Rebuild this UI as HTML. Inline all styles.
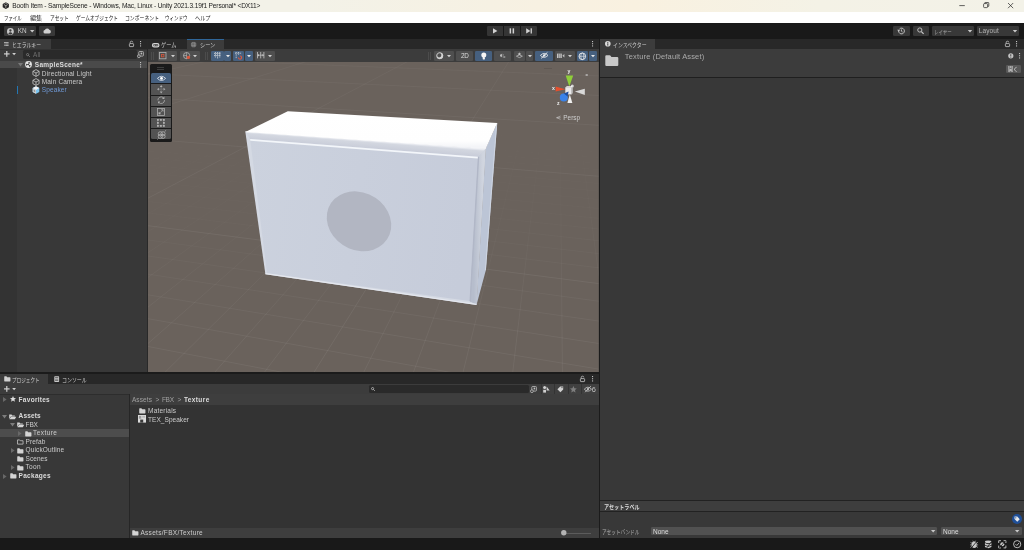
<!DOCTYPE html>
<html>
<head>
<meta charset="utf-8">
<title>Unity</title>
<style>
html,body{margin:0;padding:0;}
body{width:1024px;height:550px;overflow:hidden;background:#383838;position:relative;font-family:"Liberation Sans",sans-serif;font-size:6.5px;color:#c4c4c4;}
.a{position:absolute;}
.t{position:absolute;white-space:nowrap;line-height:1;}
svg{position:absolute;overflow:visible;}
svg text{font-family:"Liberation Sans","Noto Sans CJK JP",sans-serif;}
</style>
</head>
<body>
<div id="root" style="position:absolute;left:0;top:0;width:1024px;height:550px;will-change:transform;">
<div class="a" style="left:0px;top:0px;width:1024px;height:11.7px;background:linear-gradient(90deg,#f3f2e8 0%,#f3f2e8 30%,#f6f1e3 48%,#f9f1e0 62%,#f4f2e6 80%,#f3f2e8 100%);"></div>
<div class="a" style="left:0px;top:11.7px;width:1024px;height:11.1px;background:#ffffff;"></div>
<div class="a" style="left:0px;top:22.7px;width:1024px;height:16.1px;background:#191919;"></div>
<svg style="left:1.7px;top:1.5px" width="7.6" height="7.2" viewBox="0 0 18 18"><path d="M9 0.4 L16.8 4.7 V13.3 L9 17.6 L1.2 13.3 V4.7 Z" fill="#262626"/><path d="M9 9.2 V14.6 M9 9.2 L4.2 6.4 M9 9.2 L13.8 6.4" stroke="#d8d6cc" stroke-width="1.6" fill="none"/><path d="M6.2 4.2 L9 2.8 L11.8 4.2" stroke="#d8d6cc" stroke-width="1.2" fill="none"/></svg>
<div class="t" style="left:12.3px;top:3px;font-size:6.6px;color:#1b1b1b;letter-spacing:-0.15px;">Booth Item - SampleScene - Windows, Mac, Linux - Unity 2021.3.19f1 Personal* &lt;DX11&gt;</div>
<svg style="left:0;top:0" width="1024" height="12"><g stroke="#222" stroke-width="0.7" fill="none"><path d="M959.3 5.6 H964.8"/><rect x="983.6" y="3.6" width="4" height="4" rx="0.8"/><path d="M984.8 3.6 V2.8 Q984.8 2.5 985.2 2.5 H988.2 Q988.8 2.5 988.8 3.1 V6 Q988.8 6.4 988.4 6.4 H987.6"/><path d="M1008 3 L1013.2 8.2 M1013.2 3 L1008 8.2"/></g></svg>
<svg style="left:3.8px;top:19.88px" width="17.6" height="1"><text x="0" y="0" font-size="6" fill="#1a1a1a" textLength="17.6" lengthAdjust="spacingAndGlyphs">ファイル</text></svg>
<svg style="left:29.8px;top:19.88px" width="12.2" height="1"><text x="0" y="0" font-size="6" fill="#1a1a1a" textLength="12.2" lengthAdjust="spacingAndGlyphs">編集</text></svg>
<svg style="left:49.6px;top:19.88px" width="18.8" height="1"><text x="0" y="0" font-size="6" fill="#1a1a1a" textLength="18.8" lengthAdjust="spacingAndGlyphs">アセット</text></svg>
<svg style="left:75.8px;top:19.88px" width="42" height="1"><text x="0" y="0" font-size="6" fill="#1a1a1a" textLength="42" lengthAdjust="spacingAndGlyphs">ゲームオブジェクト</text></svg>
<svg style="left:124.8px;top:19.88px" width="34" height="1"><text x="0" y="0" font-size="6" fill="#1a1a1a" textLength="34" lengthAdjust="spacingAndGlyphs">コンポーネント</text></svg>
<svg style="left:165.4px;top:19.88px" width="22.6" height="1"><text x="0" y="0" font-size="6" fill="#1a1a1a" textLength="22.6" lengthAdjust="spacingAndGlyphs">ウィンドウ</text></svg>
<svg style="left:195.2px;top:19.88px" width="15.5" height="1"><text x="0" y="0" font-size="6" fill="#1a1a1a" textLength="15.5" lengthAdjust="spacingAndGlyphs">ヘルプ</text></svg>
<div class="a" style="left:4.1px;top:26px;width:31.7px;height:9.8px;background:#383838;border-radius:1.2px;"></div>
<div class="a" style="left:39px;top:26px;width:16.2px;height:9.8px;background:#383838;border-radius:1.2px;"></div>
<svg style="left:6.8px;top:27.5px" width="6.8" height="6.8" viewBox="0 0 14 14"><circle cx="7" cy="7" r="7" fill="#c8c8c8"/><circle cx="7" cy="5.2" r="2.4" fill="#383838"/><path d="M2.6 11.4 Q7 6.4 11.4 11.4 Q7 15 2.6 11.4Z" fill="#383838"/></svg>
<div class="t" style="left:17.8px;top:28px;font-size:6.4px;color:#cccccc;letter-spacing:-0.15px;">KN</div>
<svg style="left:29.6px;top:29.8px" width="5" height="3"><path d="M0 0 H4.4 L2.2 2.6Z" fill="#c8c8c8"/></svg>
<svg style="left:42.8px;top:28.2px" width="8.2" height="5.8" viewBox="0 0 18 13"><path d="M4.5 12.5 A4 4 0 0 1 4 4.6 A5.2 5.2 0 0 1 13.8 4.2 A4.2 4.2 0 0 1 14 12.5 Z" fill="#d0d0d0"/></svg>
<div class="a" style="left:486.6px;top:26px;width:50.2px;height:9.8px;background:#353535;border-radius:1.2px;"></div>
<div class="a" style="left:502.6px;top:26px;width:0.5px;height:9.8px;background:#191919;"></div>
<div class="a" style="left:519.6px;top:26px;width:0.5px;height:9.8px;background:#191919;"></div>
<svg style="left:0;top:0" width="1024" height="40"><g fill="#d2d2d2"><path d="M493 28.3 L497.4 30.9 L493 33.5Z"/><rect x="509.6" y="28.3" width="1.5" height="5.2"/><rect x="512.6" y="28.3" width="1.5" height="5.2"/><path d="M526.2 28.3 L530.4 30.9 L526.2 33.5Z"/><rect x="530.6" y="28.3" width="1.3" height="5.2"/></g></svg>
<div class="a" style="left:893.1px;top:26px;width:16.7px;height:9.8px;background:#383838;border-radius:1.2px;"></div>
<div class="a" style="left:913px;top:26px;width:15.9px;height:9.8px;background:#383838;border-radius:1.2px;"></div>
<div class="a" style="left:932.1px;top:26px;width:41.7px;height:9.8px;background:#383838;border-radius:1.2px;"></div>
<div class="a" style="left:977.3px;top:26px;width:41.4px;height:9.8px;background:#383838;border-radius:1.2px;"></div>
<svg style="left:0;top:0" width="1024" height="40"><g fill="none" stroke="#c8c8c8" stroke-width="0.9"><path d="M898.6 31 A2.9 2.9 0 1 0 899.6 28.8"/><path d="M901.4 29.4 V31.2 L902.6 32"/><circle cx="919.8" cy="30" r="2.1"/><path d="M921.4 31.6 L923.6 33.9" stroke-width="1.2"/></g><path d="M897.2 29.8 L900.2 29.8 L898.7 31.8Z" fill="#c8c8c8"/><path d="M967.8 29.9 H972.2 L970 32.5Z M1012.8 29.9 H1017.2 L1015 32.5Z" fill="#c8c8c8"/></svg>
<svg style="left:934.2px;top:33.5px" width="17.6" height="1"><text x="0" y="0" font-size="6" fill="#a8a8a8" textLength="17.6" lengthAdjust="spacingAndGlyphs">レイヤー</text></svg>
<div class="t" style="left:978.8px;top:28px;font-size:6.5px;color:#b4b4b4;letter-spacing:0.11px;">Layout</div>
<div class="a" style="left:0px;top:38.8px;width:147px;height:10px;background:#282828;"></div>
<div class="a" style="left:0px;top:38.8px;width:51px;height:10px;background:#3c3c3c;"></div>
<div class="a" style="left:0px;top:48.8px;width:147px;height:11.8px;background:#3c3c3c;"></div>
<div class="a" style="left:0px;top:60.6px;width:147px;height:311.8px;background:#383838;"></div>
<div class="a" style="left:0px;top:60.6px;width:16.8px;height:311.8px;background:#333333;"></div>
<div class="a" style="left:147px;top:38.8px;width:1.2px;height:334px;background:#292929;"></div>
<svg style="left:4.2px;top:41.6px" width="6" height="5"><g fill="#c4c4c4"><rect x="0" y="0" width="4.6" height="0.8"/><rect x="1.2" y="1.6" width="3.4" height="0.8"/><rect x="1.2" y="3.2" width="3.4" height="0.8"/><rect x="0" y="1.6" width="0.7" height="0.8"/><rect x="0" y="3.2" width="0.7" height="0.8"/></g></svg>
<svg style="left:12px;top:47px" width="29" height="1"><text x="0" y="0" font-size="6" fill="#cccccc" textLength="29" lengthAdjust="spacingAndGlyphs">ヒエラルキー</text></svg>
<svg style="left:128.7px;top:40.6px" width="6" height="7"><rect x="0.4" y="2.6" width="4.2" height="3" rx="0.6" fill="none" stroke="#c4c4c4" stroke-width="0.8"/><path d="M1.2 2.6 V1.6 A1.3 1.3 0 0 1 3.8 1.4" fill="none" stroke="#c4c4c4" stroke-width="0.8"/></svg>
<svg style="left:139.75px;top:41.15px" width="2" height="8"><g fill="#c4c4c4"><rect x="0" y="0" width="1.1" height="1.1"/><rect x="0" y="2.2" width="1.1" height="1.1"/><rect x="0" y="4.4" width="1.1" height="1.1"/></g></svg>
<svg style="left:3.6px;top:51.4px" width="14" height="7"><g fill="#d0d0d0"><rect x="2.2" y="0" width="1.2" height="5.8"/><rect x="0" y="2.3" width="5.6" height="1.2"/><path d="M8.2 2 H12 L10.1 4.2Z"/></g></svg>
<div class="a" style="left:0px;top:48.8px;width:147px;height:1.4px;background:#333333;"></div>
<div class="a" style="left:23.2px;top:50.3px;width:113.4px;height:8.6px;background:#2a2a2a;border-radius:1.5px;"></div>
<svg style="left:25.6px;top:52.6px" width="6" height="5"><circle cx="1.6" cy="1.6" r="1.1" fill="none" stroke="#8a8a8a" stroke-width="0.7"/><path d="M2.4 2.4 L3.8 3.8" stroke="#8a8a8a" stroke-width="0.8"/></svg>
<div class="t" style="left:33.1px;top:52px;font-size:6.4px;color:#6e6e6e;letter-spacing:0.1px;">All</div>
<svg style="left:137.2px;top:51.2px" width="8" height="8"><rect x="1.8" y="0.5" width="4.6" height="4.6" rx="0.8" fill="none" stroke="#c0c0c0" stroke-width="0.8"/><circle cx="1.9" cy="5.2" r="1.4" fill="#3c3c3c" stroke="#c0c0c0" stroke-width="0.8"/><rect x="3.6" y="1.6" width="1.6" height="1.8" fill="#c0c0c0"/></svg>
<div class="a" style="left:0px;top:60.6px;width:147px;height:7.4px;background:#4a4a4a;"></div>
<svg style="left:18px;top:62.8px" width="6" height="5"><path d="M0 0 H5 L2.5 3.6Z" fill="#7a7a7a"/></svg>
<svg style="left:25px;top:60.8px" width="7" height="7" viewBox="0 0 14 14"><circle cx="7" cy="7" r="6.8" fill="#e6e6e6"/><path d="M7 7 L7 1.6 L10.4 3.4 Z M7 7 L11.8 9.6 L8.6 11.8Z M7 7 L2.2 9.6 L2.4 5.4Z" fill="#333"/><circle cx="7" cy="7" r="1.2" fill="#333"/></svg>
<div class="t" style="left:34.8px;top:62px;font-size:6.5px;color:#dcdcdc;font-weight:bold;letter-spacing:0.27px;">SampleScene*</div>
<svg style="left:140.05px;top:61.65px" width="2" height="8"><g fill="#c4c4c4"><rect x="0" y="0" width="1.1" height="1.1"/><rect x="0" y="2.2" width="1.1" height="1.1"/><rect x="0" y="4.4" width="1.1" height="1.1"/></g></svg>
<svg style="left:31.9px;top:69.2px" width="8" height="8" viewBox="0 0 16 16"><g fill="none" stroke="#d0d0d0" stroke-width="1.5"><path d="M8 1.2 L14.2 4.6 V11.4 L8 14.8 L1.8 11.4 V4.6Z"/><path d="M1.8 4.6 L8 8 L14.2 4.6 M8 8 V14.8"/></g></svg>
<div class="t" style="left:41.8px;top:71px;font-size:6.5px;color:#cccccc;letter-spacing:0.2px;">Directional Light</div>
<svg style="left:31.9px;top:77.5px" width="8" height="8" viewBox="0 0 16 16"><g fill="none" stroke="#d0d0d0" stroke-width="1.5"><path d="M8 1.2 L14.2 4.6 V11.4 L8 14.8 L1.8 11.4 V4.6Z"/><path d="M1.8 4.6 L8 8 L14.2 4.6 M8 8 V14.8"/></g></svg>
<div class="t" style="left:41.8px;top:79px;font-size:6.5px;color:#cccccc;letter-spacing:0.14px;">Main Camera</div>
<svg style="left:31.9px;top:86px" width="8" height="8" viewBox="0 0 16 16"><path d="M8 0.6 L14.6 4.2 V11.8 L8 15.4 L1.4 11.8 V4.2Z" fill="#7cc6f2"/><path d="M8 0.6 L14.6 4.2 L8 7.8 L1.4 4.2Z" fill="#f4f4f4"/><path d="M8 7.8 V15.4 L1.4 11.8 V4.2Z" fill="#d4d4d4"/><path d="M3.4 7 L6.4 8.8 V12.4 L3.4 10.6Z" fill="#4a4a4a" opacity="0.55"/></svg>
<div class="t" style="left:41.8px;top:87px;font-size:6.5px;color:#7099d6;letter-spacing:0.11px;">Speaker</div>
<div class="a" style="left:16.8px;top:85.8px;width:1.1px;height:8px;background:#2377b4;"></div>
<div class="a" style="left:148.2px;top:38.8px;width:450.8px;height:10px;background:#282828;"></div>
<div class="a" style="left:187.3px;top:38.8px;width:36.7px;height:10px;background:#3c3c3c;"></div><div class="a" style="left:187.3px;top:38.8px;width:36.7px;height:0.7px;background:#2f6699;"></div>
<div class="a" style="left:148.2px;top:48.8px;width:450.8px;height:14px;background:#3c3c3c;"></div>
<div class="a" style="left:599px;top:38.8px;width:1.3px;height:500px;background:#1b1b1b;"></div>
<svg style="left:152.2px;top:42.6px" width="8" height="5"><rect x="0.5" y="0.6" width="6.4" height="3.2" rx="1.6" fill="none" stroke="#d4d4d4" stroke-width="1.2"/><rect x="1.4" y="1.8" width="2" height="0.9" fill="#d4d4d4"/><rect x="4.4" y="1.8" width="1.2" height="0.9" fill="#d4d4d4"/></svg>
<svg style="left:161.4px;top:47px" width="15.4" height="1"><text x="0" y="0" font-size="6" fill="#cccccc" textLength="15.4" lengthAdjust="spacingAndGlyphs">ゲーム</text></svg>
<svg style="left:191px;top:41.9px" width="6" height="6"><g fill="none" stroke="#a4a4a4" stroke-width="0.55"><rect x="0.4" y="0.4" width="4.4" height="4.4" rx="1.3"/><path d="M0.4 1.9 H4.8 M0.4 3.4 H4.8 M1.9 0.4 V4.8 M3.4 0.4 V4.8"/></g></svg>
<svg style="left:199.7px;top:47px" width="15.3" height="1"><text x="0" y="0" font-size="6" fill="#cccccc" textLength="15.3" lengthAdjust="spacingAndGlyphs">シーン</text></svg>
<svg style="left:591.65px;top:41.15px" width="2" height="8"><g fill="#c4c4c4"><rect x="0" y="0" width="1.1" height="1.1"/><rect x="0" y="2.2" width="1.1" height="1.1"/><rect x="0" y="4.4" width="1.1" height="1.1"/></g></svg>
<div class="a" style="left:151.4px;top:51.6px;width:0.6px;height:8.4px;background:#4c4c4c;"></div>
<div class="a" style="left:153px;top:51.6px;width:0.6px;height:8.4px;background:#4c4c4c;"></div>
<div class="a" style="left:158px;top:50.6px;width:19.4px;height:10.4px;background:#4f4f4f;border-radius:1.2px;"></div>
<div class="a" style="left:179.9px;top:50.6px;width:19.9px;height:10.4px;background:#4f4f4f;border-radius:1.2px;"></div>
<svg style="left:159.3px;top:52.4px" width="8" height="8"><rect x="0.4" y="0.4" width="6.6" height="6.4" fill="none" stroke="#b4b4b4" stroke-width="0.8"/><rect x="2.5" y="2.4" width="2.4" height="2.4" fill="none" stroke="#d8553a" stroke-width="0.8"/></svg>
<svg style="left:170.6px;top:55.1px" width="5" height="3"><path d="M0 0 H4 L2 2.3Z" fill="#d0d0d0"/></svg>
<svg style="left:182.6px;top:52px" width="8" height="8"><circle cx="3.6" cy="3.6" r="3.1" fill="none" stroke="#c4c4c4" stroke-width="0.7"/><path d="M3.6 0.5 V6.7 M0.5 3.6 H3.6" stroke="#c4c4c4" stroke-width="0.6"/><circle cx="5.4" cy="5.4" r="1.7" fill="#d8553a"/></svg>
<svg style="left:192.8px;top:55.1px" width="5" height="3"><path d="M0 0 H4 L2 2.3Z" fill="#d0d0d0"/></svg>
<div class="a" style="left:205.2px;top:51.6px;width:0.6px;height:8.4px;background:#4c4c4c;"></div>
<div class="a" style="left:206.8px;top:51.6px;width:0.6px;height:8.4px;background:#4c4c4c;"></div>
<div class="a" style="left:211px;top:50.6px;width:12.6px;height:10.4px;background:#46607f;border-radius:1.2px;"></div>
<div class="a" style="left:224px;top:50.6px;width:7px;height:10.4px;background:#46607f;border-radius:1.2px;"></div>
<svg style="left:225.5px;top:55.1px" width="5" height="3"><path d="M0 0 H4 L2 2.3Z" fill="#e8e8e8"/></svg>
<div class="a" style="left:233.3px;top:50.6px;width:10.9px;height:10.4px;background:#46607f;border-radius:1.2px;"></div>
<div class="a" style="left:244.6px;top:50.6px;width:8.1px;height:10.4px;background:#46607f;border-radius:1.2px;"></div>
<svg style="left:246.6px;top:55.1px" width="5" height="3"><path d="M0 0 H4 L2 2.3Z" fill="#e8e8e8"/></svg>
<div class="a" style="left:255px;top:50.6px;width:19.9px;height:10.4px;background:#4f4f4f;border-radius:1.2px;"></div>
<svg style="left:268.2px;top:55.1px" width="5" height="3"><path d="M0 0 H4 L2 2.3Z" fill="#d0d0d0"/></svg>
<svg style="left:213.6px;top:52.2px" width="8" height="8"><g stroke="#eee" stroke-width="0.7" fill="none"><path d="M0 1.4 H7 M0 3.6 H7 M1.4 0 V5.6 M3.6 0 V7 M5.8 0 V5.6" stroke-dasharray="1.2 0.5"/></g></svg>
<svg style="left:235.2px;top:52.2px" width="8" height="8"><g stroke="#eee" stroke-width="0.7" fill="none" stroke-dasharray="1 0.7"><path d="M0 1.2 H6.4 M1.2 0 V6.6 M3.6 0 V3.4"/></g><path d="M3.4 5.6 A1.6 1.6 0 1 0 5 4" stroke="#e0553a" stroke-width="1.1" fill="none"/></svg>
<svg style="left:257.4px;top:52.4px" width="9" height="7"><g stroke="#c4c4c4" stroke-width="0.8" fill="none"><path d="M0.5 0 V6.4 M3.7 0 V6.4 M6.9 0 V6.4 M0.5 3.2 H6.9"/></g><path d="M0.5 3.2 L2 2 V4.4Z M6.9 3.2 L5.4 2 V4.4Z" fill="#c4c4c4"/></svg>
<div class="a" style="left:428.2px;top:51.6px;width:0.6px;height:8.4px;background:#4c4c4c;"></div>
<div class="a" style="left:429.8px;top:51.6px;width:0.6px;height:8.4px;background:#4c4c4c;"></div>
<div class="a" style="left:433.8px;top:50.6px;width:20.1px;height:10.4px;background:#4f4f4f;border-radius:1.2px;"></div>
<svg style="left:447.2px;top:55.1px" width="5" height="3"><path d="M0 0 H4 L2 2.3Z" fill="#d0d0d0"/></svg>
<svg style="left:436px;top:52px" width="8" height="8"><circle cx="3.8" cy="3.8" r="3.3" fill="#d4d4d4"/><circle cx="3.1" cy="3.1" r="2.3" fill="#4f4f4f"/><circle cx="3.8" cy="3.8" r="3" fill="none" stroke="#d4d4d4" stroke-width="0.7"/></svg>
<div class="a" style="left:456.4px;top:50.6px;width:16.6px;height:10.4px;background:#4f4f4f;border-radius:1.2px;"></div>
<div class="t" style="left:461px;top:53px;font-size:6.3px;color:#dcdcdc;letter-spacing:-0.13px;">2D</div>
<div class="a" style="left:475px;top:50.6px;width:17.2px;height:10.4px;background:#46607f;border-radius:1.2px;"></div>
<svg style="left:480.8px;top:51.6px" width="6" height="9"><circle cx="2.8" cy="2.9" r="2.5" fill="#f6f6f6"/><rect x="1.7" y="5" width="2.2" height="2.4" rx="0.4" fill="#f6f6f6"/></svg>
<div class="a" style="left:494.3px;top:50.6px;width:17.2px;height:10.4px;background:#4f4f4f;border-radius:1.2px;"></div>
<svg style="left:500.2px;top:53.2px" width="8" height="7"><path d="M0 1.6 H1 L2.2 0.6 V4.6 L1 3.6 H0Z" fill="#b8b8b8"/><path d="M3.4 3 L5.2 5 M5.2 3 L3.4 5" stroke="#b8b8b8" stroke-width="0.6"/><path d="M3.2 1.2 Q4 2 3.4 2.6" stroke="#b8b8b8" stroke-width="0.5" fill="none"/></svg>
<div class="a" style="left:513.6px;top:50.6px;width:11.8px;height:10.4px;background:#4f4f4f;border-radius:1.2px;"></div>
<div class="a" style="left:526px;top:50.6px;width:7.3px;height:10.4px;background:#4f4f4f;border-radius:1.2px;"></div>
<svg style="left:527.6px;top:55.1px" width="5" height="3"><path d="M0 0 H4 L2 2.3Z" fill="#d0d0d0"/></svg>
<svg style="left:516.2px;top:52.4px" width="8" height="7"><path d="M0.4 4.2 L3.4 2.8 L6.4 4.2 L3.4 5.6Z" fill="none" stroke="#c4c4c4" stroke-width="0.7"/><path d="M3.4 0.2 L4 1.4 L5.2 1.6 L4.2 2.4 L4.5 3.6 L3.4 3 L2.3 3.6 L2.6 2.4 L1.6 1.6 L2.8 1.4Z" fill="#c4c4c4"/></svg>
<div class="a" style="left:535.4px;top:50.6px;width:17.6px;height:10.4px;background:#46607f;border-radius:1.2px;"></div>
<svg style="left:539.6px;top:52.4px" width="9" height="7"><path d="M0.4 3.4 Q4.2 -0.6 8 3.4 Q4.2 7.4 0.4 3.4Z" fill="none" stroke="#f0f0f0" stroke-width="0.8"/><circle cx="4.2" cy="3.4" r="1.2" fill="#f0f0f0"/><path d="M1.2 6.4 L7.4 0.4" stroke="#f0f0f0" stroke-width="0.9"/></svg>
<div class="a" style="left:554.9px;top:50.6px;width:19.9px;height:10.4px;background:#4f4f4f;border-radius:1.2px;"></div>
<svg style="left:568px;top:55.1px" width="5" height="3"><path d="M0 0 H4 L2 2.3Z" fill="#d0d0d0"/></svg>
<svg style="left:557px;top:53px" width="9" height="6"><rect x="0" y="0.6" width="4.8" height="4.4" fill="#c4c4c4"/><path d="M5.4 2.8 L7.4 1 V4.6Z" fill="#c4c4c4"/><path d="M1.6 0.6 V5 M3.2 0.6 V5" stroke="#4f4f4f" stroke-width="0.5"/></svg>
<div class="a" style="left:576.8px;top:50.6px;width:11.4px;height:10.4px;background:#46607f;border-radius:1.2px;"></div>
<div class="a" style="left:588.6px;top:50.6px;width:8.4px;height:10.4px;background:#46607f;border-radius:1.2px;"></div>
<svg style="left:590.8px;top:55.1px" width="5" height="3"><path d="M0 0 H4 L2 2.3Z" fill="#e8e8e8"/></svg>
<svg style="left:578.2px;top:51.6px" width="9" height="9"><circle cx="4.3" cy="4.3" r="3.3" fill="none" stroke="#f0f0f0" stroke-width="0.9"/><ellipse cx="4.3" cy="4.3" rx="1.5" ry="3.3" fill="none" stroke="#f0f0f0" stroke-width="0.6"/><path d="M1 4.3 H7.6" stroke="#f0f0f0" stroke-width="0.6"/></svg>
<svg style="left:148.2px;top:62.1px" width="450.8" height="310.3" viewBox="0 0 450.8 310.3"><defs><linearGradient id="fd" x1="0" y1="0" x2="0" y2="1"><stop offset="0.15" stop-color="#fff" stop-opacity="0"/><stop offset="0.5" stop-color="#fff" stop-opacity="0.3"/><stop offset="0.9" stop-color="#fff" stop-opacity="1"/></linearGradient><linearGradient id="fd2" x1="0" y1="0" x2="0" y2="1"><stop offset="0" stop-color="#fff" stop-opacity="0.55"/><stop offset="0.6" stop-color="#fff" stop-opacity="1"/></linearGradient><mask id="mk2"><rect width="450.8" height="310.3" fill="url(#fd2)"/></mask><mask id="mk"><rect width="450.8" height="310.3" fill="url(#fd)"/></mask><clipPath id="cp"><rect width="450.8" height="310.3"/></clipPath></defs><rect width="450.8" height="310.3" fill="#6a625c"/><g clip-path="url(#cp)"><g mask="url(#mk)" fill="none"><path d="M-65.51 -2 L-1982.34 312.3 M-55.57 -2 L-1932.4 312.3 M-45.63 -2 L-1882.47 312.3 M-25.76 -2 L-1782.61 312.3 M-15.82 -2 L-1732.67 312.3 M-5.88 -2 L-1682.74 312.3 M4.06 -2 L-1632.81 312.3 M14 -2 L-1582.87 312.3 M23.93 -2 L-1532.94 312.3 M33.87 -2 L-1483.01 312.3 M43.81 -2 L-1433.08 312.3 M53.75 -2 L-1383.14 312.3 M73.62 -2 L-1283.28 312.3 M83.56 -2 L-1233.35 312.3 M93.5 -2 L-1183.41 312.3 M103.44 -2 L-1133.48 312.3 M113.38 -2 L-1083.55 312.3 M123.32 -2 L-1033.62 312.3 M133.25 -2 L-983.68 312.3 M143.19 -2 L-933.75 312.3 M153.13 -2 L-883.82 312.3 M173.01 -2 L-783.95 312.3 M182.94 -2 L-734.02 312.3 M192.88 -2 L-684.09 312.3 M202.82 -2 L-634.15 312.3 M212.76 -2 L-584.22 312.3 M222.7 -2 L-534.29 312.3 M232.64 -2 L-484.36 312.3 M242.57 -2 L-434.42 312.3 M252.51 -2 L-384.49 312.3 M272.39 -2 L-284.63 312.3 M282.33 -2 L-234.69 312.3 M292.26 -2 L-184.76 312.3 M302.2 -2 L-134.83 312.3 M312.14 -2 L-84.9 312.3 M322.08 -2 L-34.96 312.3 M332.02 -2 L14.97 312.3 M341.96 -2 L64.9 312.3 M351.89 -2 L114.84 312.3 M371.77 -2 L214.7 312.3 M381.71 -2 L264.63 312.3 M391.65 -2 L314.57 312.3 M401.58 -2 L364.5 312.3 M411.52 -2 L414.43 312.3 M421.46 -2 L464.36 312.3 M431.4 -2 L514.3 312.3 M441.34 -2 L564.23 312.3 M-2 -5.48 L452.8 12.42 M-2 -2.87 L452.8 15.66 M-2 -1.49 L452.8 17.36 M-2 -0.06 L452.8 19.13 M-2 1.42 L452.8 20.97 M-2 2.95 L452.8 22.87 M-2 4.54 L452.8 24.85 M-2 6.2 L452.8 26.9 M-2 7.92 L452.8 29.03 M-2 9.71 L452.8 31.26 M-2 13.53 L452.8 35.98 M-2 15.56 L452.8 38.5 M-2 17.68 L452.8 41.13 M-2 19.9 L452.8 43.88 M-2 22.21 L452.8 46.75 M-2 24.64 L452.8 49.77 M-2 27.19 L452.8 52.93 M-2 29.87 L452.8 56.24 M-2 32.68 L452.8 59.73 M-2 38.76 L452.8 67.26 M-2 42.05 L452.8 71.35 M-2 45.53 L452.8 75.66 M-2 49.21 L452.8 80.23 M-2 53.12 L452.8 85.07 M-2 57.26 L452.8 90.21 M-2 61.68 L452.8 95.69 M-2 66.39 L452.8 101.52 M-2 71.42 L452.8 107.76 M-2 82.6 L452.8 121.62 M-2 88.83 L452.8 129.35 M-2 95.56 L452.8 137.69 M-2 102.84 L452.8 146.72 M-2 110.76 L452.8 156.54 M-2 119.39 L452.8 167.24 M-2 128.84 L452.8 178.96 M-2 139.23 L452.8 191.84 M-2 150.71 L452.8 206.07 M-2 177.69 L452.8 239.52 M-2 193.69 L452.8 259.36 M-2 211.81 L452.8 281.82 M-2 232.49 L452.8 307.47 M-2 256.34 L452.8 337.03 M-2 284.12 L452.8 371.48 M-2 316.9 L452.8 412.12" stroke="#fff" stroke-opacity="0.062" stroke-width="0.9"/></g><g mask="url(#mk2)"><path d="M-35.7 -2 L-1832.54 312.3 M63.69 -2 L-1333.21 312.3 M163.07 -2 L-833.88 312.3 M262.45 -2 L-334.56 312.3 M361.83 -2 L164.77 312.3 M-2 -4.2 L452.8 14.01 M-2 11.58 L452.8 33.57 M-2 35.64 L452.8 63.4 M-2 76.81 L452.8 114.45 M-2 163.45 L452.8 221.87" stroke="#fff" stroke-opacity="0.072" stroke-width="0.9" fill="none"/></g></g><defs><linearGradient id="topg" x1="0" y1="0" x2="0.08" y2="1"><stop offset="0" stop-color="#ffffff"/><stop offset="0.85" stop-color="#fefefe"/><stop offset="1" stop-color="#f4f5f8"/></linearGradient><linearGradient id="frg" x1="0" y1="0" x2="1" y2="0.1"><stop offset="0" stop-color="#ccd2de"/><stop offset="1" stop-color="#c6ccda"/></linearGradient></defs><polygon points="337.7,86.5 349.2,61.1 337.9,207.9 328.5,243.1" fill="#bcc5d6"/><polygon points="349.2,61.1 348.2,61.5 336.9,208.5 337.9,207.9" fill="#cfd6e2"/><linearGradient id="strg" gradientUnits="userSpaceOnUse" x1="325.8" y1="0" x2="334.8" y2="0"><stop offset="0" stop-color="#b6bdcc"/><stop offset="1" stop-color="#d0d5df"/></linearGradient><polygon points="97.3,69.5 337.7,86.5 328.5,243.1 117.4,212.3" fill="#d4d9e3"/><polygon points="329.8,94.7 337.7,86.5 328.5,243.1 321.5,239.1" fill="url(#strg)"/><linearGradient id="bandg" gradientUnits="userSpaceOnUse" x1="97.3" y1="69.5" x2="96.75" y2="76.9"><stop offset="0" stop-color="#eceef3"/><stop offset="0.25" stop-color="#d3d7e0"/><stop offset="1" stop-color="#c9cdd9"/></linearGradient><polygon points="97.3,69.5 337.7,86.5 329.8,94.7 102.1,76.9" fill="url(#bandg)"/><polygon points="102.1,76.9 329.8,94.7 321.5,239.1 119,211.3" fill="url(#frg)"/><polygon points="329.8,94.7 331.2,95.1 322.9,239.9 321.5,239.1" fill="#b1b7c7"/><polygon points="102.1,76.9 329.8,94.7 329.7,96.6 102.3,78.8" fill="#f3f6fa"/><polygon points="117.4,212.3 328.5,243.1 328.2,241.8 117.6,211" fill="#e4e7ee"/><polygon points="97.3,70 139.8,49.3 349.2,61.1 337.7,87" fill="url(#topg)"/><g transform="translate(211 159.3)"><circle r="1" transform="matrix(32.2 2.0 2.2 29.9 0 0)" fill="#b2b6c2"/></g></svg>
<div class="a" style="left:149.8px;top:63.8px;width:22.4px;height:77.8px;background:#1a1a1a;border-radius:1.5px;"></div>
<div class="a" style="left:157.4px;top:67.1px;width:7px;height:0.6px;background:#3d3d3d;"></div>
<div class="a" style="left:157.4px;top:68.5px;width:7px;height:0.6px;background:#3d3d3d;"></div>
<div class="a" style="left:151px;top:72.8px;width:19.8px;height:10.6px;background:#46607f;border-radius:1.5px 1.5px 0 0;"></div>
<div class="a" style="left:151px;top:84.2px;width:19.8px;height:10.5px;background:#535353;"></div>
<div class="a" style="left:151px;top:95.6px;width:19.8px;height:10.5px;background:#535353;"></div>
<div class="a" style="left:151px;top:106.9px;width:19.8px;height:10.2px;background:#535353;"></div>
<div class="a" style="left:151px;top:118.1px;width:19.8px;height:10.3px;background:#535353;"></div>
<div class="a" style="left:151px;top:129.2px;width:19.8px;height:10.3px;background:#535353;border-radius:0 0 1.5px 1.5px;"></div>
<svg style="left:156.6px;top:75.2px" width="10" height="7"><path d="M0.4 3.4 Q4.5 -0.8 8.6 3.4 Q4.5 7.6 0.4 3.4Z" fill="none" stroke="#eaeef4" stroke-width="0.8"/><circle cx="4.5" cy="3.4" r="1.45" fill="#fff"/></svg>
<svg style="left:157px;top:85.2px" width="9" height="9"><g fill="#b0b0b0"><path d="M4.2 0 L5.6 1.9 H2.8Z M4.2 8.4 L5.6 6.5 H2.8Z M0 4.2 L1.9 2.8 V5.6Z M8.4 4.2 L6.5 2.8 V5.6Z"/></g><path d="M4.2 2.2 V6.2 M2.2 4.2 H6.2" stroke="#b0b0b0" stroke-width="0.6" stroke-dasharray="0.7 0.6" fill="none"/></svg>
<svg style="left:157.2px;top:96.4px" width="9" height="9"><g fill="none" stroke="#b0b0b0" stroke-width="0.8"><path d="M0.9 4.3 A3.3 3.3 0 0 1 6.6 1.9"/><path d="M7.5 4.1 A3.3 3.3 0 0 1 1.8 6.5"/></g><path d="M7.4 0.6 V3 H5Z M1 7.8 V5.4 H3.4Z" fill="#b0b0b0"/></svg>
<svg style="left:157.4px;top:107.8px" width="8" height="8"><rect x="0.4" y="0.4" width="7" height="7" fill="none" stroke="#b0b0b0" stroke-width="0.8"/><rect x="1.5" y="4.3" width="2" height="2" fill="#b0b0b0"/><path d="M3.6 4.2 L6 1.8 M4.2 1.7 H6.1 V3.6" stroke="#b0b0b0" stroke-width="0.7" fill="none"/></svg>
<svg style="left:157.4px;top:119.3px" width="8" height="8"><rect x="0.9" y="0.9" width="6" height="6" fill="none" stroke="#b0b0b0" stroke-width="0.45" opacity="0.7"/><g fill="#b0b0b0"><rect x="0" y="0" width="1.8" height="1.8"/><rect x="3" y="0" width="1.8" height="1.8"/><rect x="6" y="0" width="1.8" height="1.8"/><rect x="0" y="3" width="1.8" height="1.8"/><rect x="6" y="3" width="1.8" height="1.8"/><rect x="0" y="6" width="1.8" height="1.8"/><rect x="3" y="6" width="1.8" height="1.8"/><rect x="6" y="6" width="1.8" height="1.8"/></g></svg>
<svg style="left:156.8px;top:129.8px" width="10" height="10" viewBox="0 0 9 9"><g fill="none" stroke="#b0b0b0" stroke-width="0.7"><circle cx="3" cy="3.4" r="1.9"/><circle cx="5.4" cy="3.4" r="1.9"/><circle cx="3" cy="5.8" r="1.9"/><circle cx="5.4" cy="5.8" r="1.9"/></g><path d="M6.8 1.6 L8.2 0.2 M0.4 8.6 L1.4 7.6" stroke="#b0b0b0" stroke-width="0.7"/></svg>
<div class="a" style="left:544px;top:67.7px;width:7.6px;height:0.7px;background:#5f5853;"></div>
<svg style="left:0;top:0" width="1024" height="130"><circle cx="572.3" cy="85.9" r="1.5" fill="#d8d8d8"/><path d="M565.7 75.6 H573.2 L569.3 86.4Z" fill="#8fce3a"/><path d="M555.6 86.4 L565.4 89.2 L555.6 91.4Z" fill="#e5502f"/><path d="M574.8 91.4 L584.8 88.8 V95Z" fill="#d9d9d9"/><path d="M569.8 94.6 L567.4 103 H572.4Z" fill="#efefef"/><rect x="565.3" y="87.4" width="6.4" height="7" fill="#e9e9ea"/><path d="M565.3 87.4 L566.8 86.2 H572.8 L571.7 87.4Z" fill="#fafafa"/><path d="M571.7 87.4 L572.8 86.2 V93 L571.7 94.4Z" fill="#bdbdbd"/><circle cx="563.8" cy="97.6" r="4" fill="#3a82e8"/><path d="M563.8 93.6 L568.6 91.6 L567.6 96.6Z" fill="#1f4fa0"/><g fill="none" stroke="#d4d4d4" stroke-width="0.5"><path d="M556.6 117.7 L560.6 116 M556.6 117.7 L560.6 119.4 M556.6 117.7 H560.6"/></g><rect x="585.6" y="74" width="2.2" height="0.6" fill="#d0d0d0"/><rect x="585.6" y="75.2" width="2.2" height="0.6" fill="#d0d0d0"/></svg>
<div class="t" style="left:567.6px;top:69px;font-size:5.2px;color:#ececec;font-weight:bold;">y</div>
<div class="t" style="left:552px;top:86px;font-size:5.2px;color:#ececec;font-weight:bold;">x</div>
<div class="t" style="left:557px;top:101px;font-size:5.2px;color:#ececec;font-weight:bold;">z</div>
<div class="t" style="left:563.3px;top:115px;font-size:6.4px;color:#cfcfcf;letter-spacing:0.02px;">Persp</div>
<div class="a" style="left:600.3px;top:38.8px;width:423.7px;height:10px;background:#282828;"></div>
<div class="a" style="left:600.3px;top:38.8px;width:55px;height:10px;background:#3c3c3c;"></div>
<div class="a" style="left:600.3px;top:48.8px;width:423.7px;height:28.4px;background:#3c3c3c;"></div>
<div class="a" style="left:600.3px;top:77.2px;width:423.7px;height:1px;background:#1f1f1f;"></div>
<div class="a" style="left:600.3px;top:78.2px;width:423.7px;height:460px;background:#383838;"></div>
<svg style="left:604.6px;top:41.1px" width="6" height="6"><circle cx="2.8" cy="2.8" r="2.8" fill="#dcdcdc"/><rect x="2.3" y="2.3" width="1" height="2.3" fill="#3c3c3c"/><rect x="2.3" y="0.9" width="1" height="1" fill="#3c3c3c"/></svg>
<svg style="left:612.6px;top:47px" width="33.6" height="1"><text x="0" y="0" font-size="6" fill="#cccccc" textLength="33.6" lengthAdjust="spacingAndGlyphs">インスペクター</text></svg>
<svg style="left:1004.8px;top:40.6px" width="6" height="7"><rect x="0.4" y="2.6" width="4.2" height="3" rx="0.6" fill="none" stroke="#c4c4c4" stroke-width="0.8"/><path d="M1.2 2.6 V1.6 A1.3 1.3 0 0 1 3.8 1.4" fill="none" stroke="#c4c4c4" stroke-width="0.8"/></svg>
<svg style="left:1015.85px;top:41.15px" width="2" height="8"><g fill="#c4c4c4"><rect x="0" y="0" width="1.1" height="1.1"/><rect x="0" y="2.2" width="1.1" height="1.1"/><rect x="0" y="4.4" width="1.1" height="1.1"/></g></svg>
<svg style="left:605px;top:55px" width="14" height="12"><path d="M0.3 1.2 Q0.3 0.2 1.3 0.2 H4.6 Q5.2 0.2 5.6 0.8 L6.4 2 H12.2 Q13.3 2 13.3 3 V10 Q13.3 11 12.2 11 H1.3 Q0.3 11 0.3 10Z" fill="#c9c9c9"/></svg>
<div class="t" style="left:624.8px;top:53px;font-size:7.5px;color:#ababab;letter-spacing:0.16px;">Texture (Default Asset)</div>
<svg style="left:1008.1px;top:53.4px" width="6" height="6"><circle cx="2.8" cy="2.8" r="2.6" fill="#c4c4c4"/><rect x="2.35" y="1.2" width="0.9" height="2" fill="#3c3c3c"/><rect x="2.35" y="3.7" width="0.9" height="0.9" fill="#3c3c3c"/></svg>
<svg style="left:1018.95px;top:53.45px" width="2" height="8"><g fill="#c4c4c4"><rect x="0" y="0" width="1.1" height="1.1"/><rect x="0" y="2.2" width="1.1" height="1.1"/><rect x="0" y="4.4" width="1.1" height="1.1"/></g></svg>
<div class="a" style="left:1005.6px;top:64.7px;width:15.6px;height:8.1px;background:#585858;border-radius:1.2px;"></div>
<svg style="left:1008.2px;top:71.27px" width="10.2" height="1"><text x="0" y="0" font-size="6" fill="#e4e4e4" textLength="10.2" lengthAdjust="spacingAndGlyphs">開く</text></svg>
<div class="a" style="left:600.3px;top:500.4px;width:423.7px;height:0.7px;background:#222;"></div>
<div class="a" style="left:600.3px;top:501.1px;width:423.7px;height:9.6px;background:#3e3e3e;"></div>
<div class="a" style="left:600.3px;top:510.7px;width:423.7px;height:0.7px;background:#222;"></div>
<svg style="left:603.6px;top:508.57px" width="35.6" height="1"><text x="0" y="0" font-size="6" font-weight="bold" fill="#dcdcdc" textLength="35.6" lengthAdjust="spacingAndGlyphs">アセットラベル</text></svg>
<svg style="left:1011.7px;top:513.7px" width="10" height="10" viewBox="0 0 8 8"><circle cx="4" cy="4" r="4" fill="#1f4f98"/><path d="M2 2 H4.2 L6.2 4.2 L4.2 6.2 L2 4Z" fill="#e8e8e8"/><circle cx="3" cy="3" r="0.5" fill="#1f4f98"/></svg>
<svg style="left:602.3px;top:533.77px" width="37.4" height="1"><text x="0" y="0" font-size="6" fill="#b0b0b0" textLength="37.4" lengthAdjust="spacingAndGlyphs">アセットバンドル</text></svg>
<div class="a" style="left:651px;top:527.2px;width:286.4px;height:8.3px;background:#515151;border-radius:1.2px;"></div>
<div class="a" style="left:941.1px;top:527.2px;width:80.5px;height:8.3px;background:#515151;border-radius:1.2px;"></div>
<div class="t" style="left:653px;top:529px;font-size:6.5px;color:#dedede;letter-spacing:0.02px;">None</div>
<div class="t" style="left:943px;top:529px;font-size:6.5px;color:#dedede;letter-spacing:0.02px;">None</div>
<svg style="left:930.9px;top:530.2px" width="5" height="3"><path d="M0 0 H4.4 L2.2 2.4Z" fill="#c8c8c8"/></svg>
<svg style="left:1014.9px;top:530.2px" width="5" height="3"><path d="M0 0 H4.4 L2.2 2.4Z" fill="#c8c8c8"/></svg>
<div class="a" style="left:0px;top:372.4px;width:599px;height:1.4px;background:#1b1b1b;"></div>
<div class="a" style="left:0px;top:373.8px;width:599px;height:10px;background:#282828;"></div>
<div class="a" style="left:0px;top:373.8px;width:48px;height:10px;background:#3c3c3c;"></div>
<div class="a" style="left:0px;top:383.8px;width:599px;height:10.6px;background:#3c3c3c;"></div>
<div class="a" style="left:0px;top:394.4px;width:129.4px;height:143.6px;background:#383838;"></div>
<div class="a" style="left:0px;top:394px;width:599px;height:0.7px;background:#2d2d2d;"></div>
<div class="a" style="left:129.4px;top:394.4px;width:1px;height:143.6px;background:#262626;"></div>
<div class="a" style="left:130.4px;top:394.4px;width:468.6px;height:10.7px;background:#3e3e3e;"></div>
<div class="a" style="left:130.4px;top:405.1px;width:468.6px;height:122.8px;background:#333333;"></div>
<div class="a" style="left:130.4px;top:527.9px;width:468.6px;height:10.1px;background:#3e3e3e;"></div>
<svg style="left:3.7px;top:376.2px" width="7.4" height="6.4" viewBox="0 0 8 7"><path d="M0.2 0.9 Q0.2 0.4 0.7 0.4 H2.6 L3.4 1.4 H6.5 Q7 1.4 7 1.9 V5.4 Q7 5.9 6.5 5.9 H0.7 Q0.2 5.9 0.2 5.4Z" fill="#d0d0d0"/></svg>
<svg style="left:12.4px;top:382px" width="27.6" height="1"><text x="0" y="0" font-size="6" fill="#cccccc" textLength="27.6" lengthAdjust="spacingAndGlyphs">プロジェクト</text></svg>
<svg style="left:54px;top:376px" width="6" height="7"><rect x="0.3" y="0.3" width="4.8" height="5.6" rx="0.6" fill="#c8c8c8"/><g fill="#3a3a3a"><rect x="1.1" y="1.4" width="3.2" height="0.6"/><rect x="1.1" y="2.8" width="3.2" height="0.6"/><rect x="1.1" y="4.2" width="3.2" height="0.6"/></g></svg>
<svg style="left:61.8px;top:382px" width="24.8" height="1"><text x="0" y="0" font-size="6" fill="#cccccc" textLength="24.8" lengthAdjust="spacingAndGlyphs">コンソール</text></svg>
<svg style="left:580.3px;top:375.6px" width="6" height="7"><rect x="0.4" y="2.6" width="4.2" height="3" rx="0.6" fill="none" stroke="#c4c4c4" stroke-width="0.8"/><path d="M1.2 2.6 V1.6 A1.3 1.3 0 0 1 3.8 1.4" fill="none" stroke="#c4c4c4" stroke-width="0.8"/></svg>
<svg style="left:591.65px;top:376.15px" width="2" height="8"><g fill="#c4c4c4"><rect x="0" y="0" width="1.1" height="1.1"/><rect x="0" y="2.2" width="1.1" height="1.1"/><rect x="0" y="4.4" width="1.1" height="1.1"/></g></svg>
<svg style="left:3.6px;top:386.2px" width="14" height="7"><g fill="#d0d0d0"><rect x="2.2" y="0" width="1.2" height="5.8"/><rect x="0" y="2.3" width="5.6" height="1.2"/><path d="M8.2 2 H12 L10.1 4.2Z"/></g></svg>
<div class="a" style="left:541px;top:384.4px;width:58px;height:9.6px;background:#404040;"></div>
<div class="a" style="left:540.6px;top:384.4px;width:0.6px;height:9.6px;background:#333;"></div>
<div class="a" style="left:554.2px;top:384.4px;width:0.6px;height:9.6px;background:#333;"></div>
<div class="a" style="left:567.8px;top:384.4px;width:0.6px;height:9.6px;background:#333;"></div>
<div class="a" style="left:581.2px;top:384.4px;width:0.6px;height:9.6px;background:#333;"></div>
<div class="a" style="left:368.6px;top:385.2px;width:160.4px;height:8px;background:#2a2a2a;border-radius:1.5px;"></div>
<svg style="left:371.4px;top:387.2px" width="6" height="5"><circle cx="1.6" cy="1.6" r="1.1" fill="none" stroke="#c8c8c8" stroke-width="0.7"/><path d="M2.4 2.4 L3.8 3.8" stroke="#c8c8c8" stroke-width="0.8"/></svg>
<svg style="left:529.6px;top:385.6px" width="8" height="8"><rect x="1.8" y="0.5" width="4.6" height="4.6" rx="0.8" fill="none" stroke="#c0c0c0" stroke-width="0.8"/><circle cx="1.9" cy="5.2" r="1.4" fill="#3c3c3c" stroke="#c0c0c0" stroke-width="0.8"/><rect x="3.6" y="1.6" width="1.6" height="1.8" fill="#c0c0c0"/></svg>
<svg style="left:543px;top:385.8px" width="8" height="8"><circle cx="1.6" cy="1.6" r="1.5" fill="#d0d0d0"/><rect x="0.2" y="3.8" width="2.8" height="2.8" fill="#d0d0d0"/><path d="M3.6 0.4 L6.6 4.4 H3.6Z" fill="#d0d0d0"/></svg>
<svg style="left:556.6px;top:386px" width="8" height="7"><path d="M0.4 3.2 L3.2 0.4 H6.2 V3.4 L3.4 6.2Z" fill="#d0d0d0"/><circle cx="5" cy="1.6" r="0.6" fill="#3c3c3c"/></svg>
<svg style="left:570.4px;top:385.8px" width="8" height="8"><path d="M3.4 0 L4.4 2.3 L6.8 2.5 L5 4.1 L5.5 6.5 L3.4 5.2 L1.3 6.5 L1.8 4.1 L0 2.5 L2.4 2.3Z" fill="#7e7e7e"/></svg>
<svg style="left:583.6px;top:385.8px" width="9" height="7"><path d="M0.3 3.2 Q3.9 -0.8 7.5 3.2 Q3.9 7.2 0.3 3.2Z" fill="none" stroke="#bcbcbc" stroke-width="0.9"/><circle cx="3.9" cy="3.2" r="1.1" fill="#bcbcbc"/><path d="M1.2 6.2 L6.8 0.2" stroke="#bcbcbc" stroke-width="1"/></svg>
<div class="t" style="left:591.8px;top:386px;font-size:7.4px;color:#c2c2c2;">6</div>
<svg style="left:3px;top:396.8px" width="5" height="6"><path d="M0 0 L3.6 2.5 L0 5Z" fill="#686868"/></svg>
<svg style="left:10.2px;top:396.2px" width="7" height="7"><path d="M3 0 L3.9 2 L6 2.2 L4.4 3.6 L4.9 5.8 L3 4.6 L1.1 5.8 L1.6 3.6 L0 2.2 L2.1 2Z" fill="#e0e0e0"/></svg>
<div class="t" style="left:18.6px;top:397px;font-size:6.5px;color:#dcdcdc;font-weight:bold;letter-spacing:0.28px;">Favorites</div>
<svg style="left:2px;top:414.57px" width="6" height="5"><path d="M0 0 H5 L2.5 3.6Z" fill="#7c7c7c"/></svg>
<svg style="left:9.4px;top:413.67px" width="8.2" height="6.4" viewBox="0 0 9 7"><path d="M0.2 0.6 H2.8 L3.6 1.5 H6.4 V2.6 H2 L0.2 5.4Z" fill="#d4d4d4"/><path d="M2.2 3 H8 L6.4 5.8 H0.5Z" fill="#d4d4d4"/></svg>
<div class="t" style="left:18.6px;top:413px;font-size:6.5px;color:#dcdcdc;font-weight:bold;letter-spacing:0.15px;">Assets</div>
<svg style="left:10.2px;top:423.1px" width="6" height="5"><path d="M0 0 H5 L2.5 3.6Z" fill="#7c7c7c"/></svg>
<svg style="left:17px;top:422.2px" width="8.2" height="6.4" viewBox="0 0 9 7"><path d="M0.2 0.6 H2.8 L3.6 1.5 H6.4 V2.6 H2 L0.2 5.4Z" fill="#d4d4d4"/><path d="M2.2 3 H8 L6.4 5.8 H0.5Z" fill="#d4d4d4"/></svg>
<div class="t" style="left:25.6px;top:422px;font-size:6.5px;color:#cccccc;letter-spacing:-0.15px;">FBX</div>
<div class="a" style="left:0px;top:428.7px;width:129.4px;height:8.3px;background:#4d4d4d;"></div>
<svg style="left:18.2px;top:430.93px" width="5" height="6"><path d="M0 0 L3.6 2.5 L0 5Z" fill="#686868"/></svg>
<svg style="left:24.6px;top:430.73px" width="7.4" height="6.4" viewBox="0 0 8 7"><path d="M0.2 0.9 Q0.2 0.4 0.7 0.4 H2.6 L3.4 1.4 H6.5 Q7 1.4 7 1.9 V5.4 Q7 5.9 6.5 5.9 H0.7 Q0.2 5.9 0.2 5.4Z" fill="#d4d4d4"/></svg>
<div class="t" style="left:33px;top:430px;font-size:6.5px;color:#cccccc;letter-spacing:0.44px;">Texture</div>
<svg style="left:17.4px;top:439.27px" width="7.4" height="6.4" viewBox="0 0 8 7"><path d="M0.5 1 H2.8 L3.6 1.9 H6.6 V5.6 H0.5Z" fill="none" stroke="#c8c8c8" stroke-width="0.85"/></svg>
<div class="t" style="left:25.6px;top:439px;font-size:6.5px;color:#cccccc;letter-spacing:0.11px;">Prefab</div>
<svg style="left:10.8px;top:448px" width="5" height="6"><path d="M0 0 L3.6 2.5 L0 5Z" fill="#686868"/></svg>
<svg style="left:17.2px;top:447.8px" width="7.4" height="6.4" viewBox="0 0 8 7"><path d="M0.2 0.9 Q0.2 0.4 0.7 0.4 H2.6 L3.4 1.4 H6.5 Q7 1.4 7 1.9 V5.4 Q7 5.9 6.5 5.9 H0.7 Q0.2 5.9 0.2 5.4Z" fill="#d4d4d4"/></svg>
<div class="t" style="left:25.6px;top:447px;font-size:6.5px;color:#cccccc;letter-spacing:0.13px;">QuickOutline</div>
<svg style="left:17.2px;top:456.33px" width="7.4" height="6.4" viewBox="0 0 8 7"><path d="M0.2 0.9 Q0.2 0.4 0.7 0.4 H2.6 L3.4 1.4 H6.5 Q7 1.4 7 1.9 V5.4 Q7 5.9 6.5 5.9 H0.7 Q0.2 5.9 0.2 5.4Z" fill="#d4d4d4"/></svg>
<div class="t" style="left:25.6px;top:456px;font-size:6.5px;color:#cccccc;letter-spacing:0.05px;">Scenes</div>
<svg style="left:10.8px;top:465.06px" width="5" height="6"><path d="M0 0 L3.6 2.5 L0 5Z" fill="#686868"/></svg>
<svg style="left:17.2px;top:464.86px" width="7.4" height="6.4" viewBox="0 0 8 7"><path d="M0.2 0.9 Q0.2 0.4 0.7 0.4 H2.6 L3.4 1.4 H6.5 Q7 1.4 7 1.9 V5.4 Q7 5.9 6.5 5.9 H0.7 Q0.2 5.9 0.2 5.4Z" fill="#d4d4d4"/></svg>
<div class="t" style="left:25.6px;top:464px;font-size:6.5px;color:#cccccc;letter-spacing:0.28px;">Toon</div>
<svg style="left:3px;top:473.6px" width="5" height="6"><path d="M0 0 L3.6 2.5 L0 5Z" fill="#686868"/></svg>
<svg style="left:9.6px;top:473.4px" width="7.4" height="6.4" viewBox="0 0 8 7"><path d="M0.2 0.9 Q0.2 0.4 0.7 0.4 H2.6 L3.4 1.4 H6.5 Q7 1.4 7 1.9 V5.4 Q7 5.9 6.5 5.9 H0.7 Q0.2 5.9 0.2 5.4Z" fill="#d4d4d4"/></svg>
<div class="t" style="left:18.6px;top:473px;font-size:6.5px;color:#dcdcdc;font-weight:bold;letter-spacing:0.28px;">Packages</div>
<div class="t" style="left:131.9px;top:397px;font-size:6.5px;color:#a0a0a0;letter-spacing:0.1px;">Assets</div>
<div class="t" style="left:155.6px;top:397px;font-size:6.5px;color:#a0a0a0;">&gt;</div>
<div class="t" style="left:161.9px;top:397px;font-size:6.5px;color:#a0a0a0;letter-spacing:-0.25px;">FBX</div>
<div class="t" style="left:177.4px;top:397px;font-size:6.5px;color:#a0a0a0;">&gt;</div>
<div class="t" style="left:183.9px;top:397px;font-size:6.5px;color:#dcdcdc;font-weight:bold;letter-spacing:0.4px;">Texture</div>
<svg style="left:139px;top:407.6px" width="7.4" height="6.4" viewBox="0 0 8 7"><path d="M0.2 0.9 Q0.2 0.4 0.7 0.4 H2.6 L3.4 1.4 H6.5 Q7 1.4 7 1.9 V5.4 Q7 5.9 6.5 5.9 H0.7 Q0.2 5.9 0.2 5.4Z" fill="#d4d4d4"/></svg>
<div class="t" style="left:148.1px;top:408px;font-size:6.5px;color:#cccccc;letter-spacing:0.2px;">Materials</div>
<svg style="left:138.4px;top:415.1px" width="8" height="8"><rect x="0" y="0" width="8" height="7.6" fill="#dcdcdc"/><rect x="0.9" y="0.9" width="2.4" height="2.8" fill="#9a9a9a"/><rect x="4.2" y="0.9" width="2.9" height="1.8" fill="#b8b8b8"/><rect x="2.2" y="4.6" width="3" height="3" fill="#3a3a3a"/></svg>
<div class="t" style="left:148.1px;top:417px;font-size:6.5px;color:#cccccc;letter-spacing:0.04px;">TEX_Speaker</div>
<svg style="left:132.1px;top:530.1px" width="7.4" height="6.4" viewBox="0 0 8 7"><path d="M0.2 0.9 Q0.2 0.4 0.7 0.4 H2.6 L3.4 1.4 H6.5 Q7 1.4 7 1.9 V5.4 Q7 5.9 6.5 5.9 H0.7 Q0.2 5.9 0.2 5.4Z" fill="#d4d4d4"/></svg>
<div class="t" style="left:140.4px;top:530px;font-size:6.5px;color:#cccccc;letter-spacing:0.31px;">Assets/FBX/Texture</div>
<div class="a" style="left:563.6px;top:532.7px;width:27px;height:1px;background:#5c5c5c;"></div>
<svg style="left:560.8px;top:530.4px" width="6" height="6"><circle cx="2.8" cy="2.8" r="2.7" fill="#b4b4b4"/></svg>
<div class="a" style="left:0px;top:538.1px;width:1024px;height:11.9px;background:#191919;"></div>
<svg style="left:970.3px;top:540.2px" width="8.6" height="8.6" viewBox="0 0 7.4 7.4"><ellipse cx="3.6" cy="4" rx="2.2" ry="2.8" fill="#c8c8c8"/><path d="M0.4 2 L2 3 M0.2 4.2 H1.6 M0.4 6.4 L2 5.4 M6.8 2 L5.2 3 M7 4.2 H5.6 M6.8 6.4 L5.2 5.4 M2.4 0.6 L3 1.6 M4.8 0.6 L4.2 1.6" stroke="#c8c8c8" stroke-width="0.6"/><path d="M1 7 L6.4 0.6" stroke="#191919" stroke-width="0.7"/></svg>
<svg style="left:984.3px;top:540.2px" width="8.6" height="8.6" viewBox="0 0 7.4 7.4"><ellipse cx="3.6" cy="1.6" rx="2.8" ry="1.2" fill="#c8c8c8"/><path d="M0.8 2.6 Q3.6 4.6 6.4 2.6 V4 Q3.6 6 0.8 4Z M0.8 4.8 Q3.6 6.8 6.4 4.8 V6 Q3.6 8 0.8 6Z" fill="#c8c8c8"/><path d="M2 7.4 L6.4 1.4" stroke="#191919" stroke-width="0.6"/></svg>
<svg style="left:998.4px;top:540.2px" width="8.6" height="8.6" viewBox="0 0 7.4 7.4"><path d="M0.6 2.6 V0.6 H2.6 M4.8 0.6 H6.8 V2.6 M6.8 4.8 V6.8 H4.8 M2.6 6.8 H0.6 V4.8" fill="none" stroke="#c8c8c8" stroke-width="0.8"/><circle cx="3.7" cy="3.7" r="1.7" fill="#c8c8c8"/><path d="M1.2 6.8 L6.4 0.8" stroke="#191919" stroke-width="0.7"/></svg>
<svg style="left:1012.5px;top:540.2px" width="8.6" height="8.6" viewBox="0 0 7.4 7.4"><circle cx="3.6" cy="3.6" r="3.1" fill="none" stroke="#c8c8c8" stroke-width="0.8"/><path d="M2.2 3.6 L3.3 4.7 L5.2 2.6" fill="none" stroke="#c8c8c8" stroke-width="0.8"/></svg>
</div>
</body>
</html>
